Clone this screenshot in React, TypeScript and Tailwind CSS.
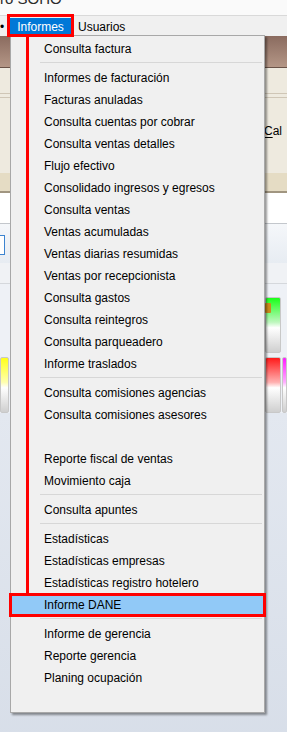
import React from "react";

type Entry = { kind: "item"; label: string } | { kind: "sep" };

const entries: Entry[] = [
  "Consulta factura",
  "-",
  "Informes de facturación",
  "Facturas anuladas",
  "Consulta cuentas por cobrar",
  "Consulta ventas detalles",
  "Flujo efectivo",
  "Consolidado ingresos y egresos",
  "Consulta ventas",
  "Ventas acumuladas",
  "Ventas diarias resumidas",
  "Ventas por recepcionista",
  "Consulta gastos",
  "Consulta reintegros",
  "Consulta parqueadero",
  "Informe traslados",
  "-",
  "Consulta comisiones agencias",
  "Consulta comisiones asesores",
  "",
  "Reporte fiscal de ventas",
  "Movimiento caja",
  "-",
  "Consulta apuntes",
  "-",
  "Estadísticas",
  "Estadísticas empresas",
  "Estadísticas registro hotelero",
  "Informe DANE",
  "-",
  "Informe de gerencia",
  "Reporte gerencia",
  "Planing ocupación",
  "",
].map((s) => (s === "-" ? { kind: "sep" } : { kind: "item", label: s }));

const ACTIVE = "Informe DANE";

function MenuItem({ label }: { label: string }) {
  const active = label === ACTIVE;
  return (
    <div
      className={
        "flex h-[22px] items-center pl-[33px] pt-[2px] text-[12px] leading-none text-black whitespace-nowrap " +
        (active ? "bg-[#91c9f7]" : "")
      }
    >
      {label}
    </div>
  );
}

function Separator() {
  return (
    <div className="flex h-[7px] items-center pl-[29px] pr-[2px]">
      <div className="h-px w-full bg-[#d7d7d7]" />
    </div>
  );
}

function ColorTile({ tone }: { tone: "green" | "red" | "yellow" | "magenta" }) {
  const bg = {
    green: "bg-[linear-gradient(#19ff19,#bff7bf_45%,#ffffff_55%,#cfcfcf)]",
    red: "bg-[linear-gradient(#ff1a1a,#ffb0b0_45%,#ffffff_55%,#cfcfcf)]",
    yellow: "bg-[linear-gradient(#ffff1a,#ffffb0_45%,#ffffff_55%,#cfcfcf)]",
    magenta: "bg-[linear-gradient(#ff1aff,#ffb0ff_45%,#ffffff_55%,#cfcfcf)]",
  }[tone];
  return <div className={"h-full w-full rounded-[2px] border border-[#c8c8c8] " + bg} />;
}

export default function App() {
  return (
    <div className="relative h-[732px] w-[287px] overflow-hidden bg-[#dfe5ee] font-['Liberation_Sans',Arial,sans-serif]">
      {/* title bar */}
      <div className="h-[15px] overflow-hidden bg-[#fafafa]">
        <div className="-mt-[9px] text-[15px] leading-[15px] text-[#2b2b2b]">ro SOHO</div>
      </div>
      <div className="h-px bg-[#d9d9d9]" />

      {/* menu bar */}
      <div className="flex h-[20px] items-center bg-[#f0f0f0] pt-px text-[12px]">
        <span className="w-[10px] text-black leading-none">•</span>
        <div className="flex h-[17px] w-[61px] items-center justify-center bg-[#0078d7] text-white">
          Informes
        </div>
        <div className="pl-[7px] text-black">Usuarios</div>
      </div>

      {/* background window content */}
      <div className="h-[31px] bg-[linear-gradient(#8a6b5f,#b49686)]" />
      <div className="h-px bg-[#6a5348]" />
      <div className="flex h-[105px] flex-col bg-[#eeeadf]">
        <div className="h-[25px]" />
        <div className="h-px bg-[#cfc6b6]" />
        <div className="h-[3px]" />
        <div className="h-px bg-[#cfc6b6]" />
        <div className="flex flex-1 items-center justify-end pb-[10px] pr-[5px]">
          <span className="text-[12px] text-black">
            <span className="underline underline-offset-2">C</span>al
          </span>
        </div>
      </div>
      <div className="h-[18px] bg-[#e5dcc4]" />
      <div className="h-[2px] bg-[#a09580]" />
      <div className="h-[30px] bg-white" />
      <div className="h-px bg-[#c3c7cc]" />
      <div className="flex h-[39px] bg-[linear-gradient(#f5f7fa,#e7ecf2)]">
        <div className="mt-[11px] h-[20px] w-[5px] border-y border-r border-[#3c84d0] bg-white" />
      </div>
      <div className="h-[20px] bg-[#f0f2f5]" />
      <div className="h-px bg-[#d5d8dc]" />
      <div className="flex h-[73px] justify-end bg-[#eef1f6] pt-[13px]">
        <div className="relative mr-[6px] h-[56px] w-[16px]">
          <ColorTile tone="green" />
          <div className="absolute left-0 top-[6px] h-[10px] w-[6px] rounded-[1px] bg-[#c98a1c]" />
        </div>
      </div>
      <div className="flex h-[56px] bg-[#eef1f6]">
        <div className="w-[9px]">
          <ColorTile tone="yellow" />
        </div>
        <div className="flex-1" />
        <div className="mr-px w-[16px]">
          <ColorTile tone="red" />
        </div>
        <div className="w-[5px]">
          <ColorTile tone="magenta" />
        </div>
      </div>
      <div className="h-[400px] bg-[linear-gradient(#e3e8f0,#d5dce7)]" />

      {/* dropdown */}
      <div className="absolute left-[10px] top-[35px] w-[255px] border border-[#a8a8a8] bg-[#f0f0f0] pb-[2px] pt-[1px] shadow-[2px_2px_2px_rgba(0,0,0,0.4)]">
        {entries.map((e, i) =>
          e.kind === "sep" ? <Separator key={i} /> : <MenuItem key={i} label={e.label} />
        )}
      </div>

      {/* annotations */}
      <div className="absolute left-[7px] top-[14px] h-[23px] w-[67px] border-[3px] border-[#ff0000]" />
      <div className="absolute left-[26px] top-[37px] h-[556px] w-[3px] bg-[#ff0000]" />
      <div className="absolute left-[9px] top-[593px] h-[24px] w-[257px] border-[3px] border-[#ff0000]" />
    </div>
  );
}
